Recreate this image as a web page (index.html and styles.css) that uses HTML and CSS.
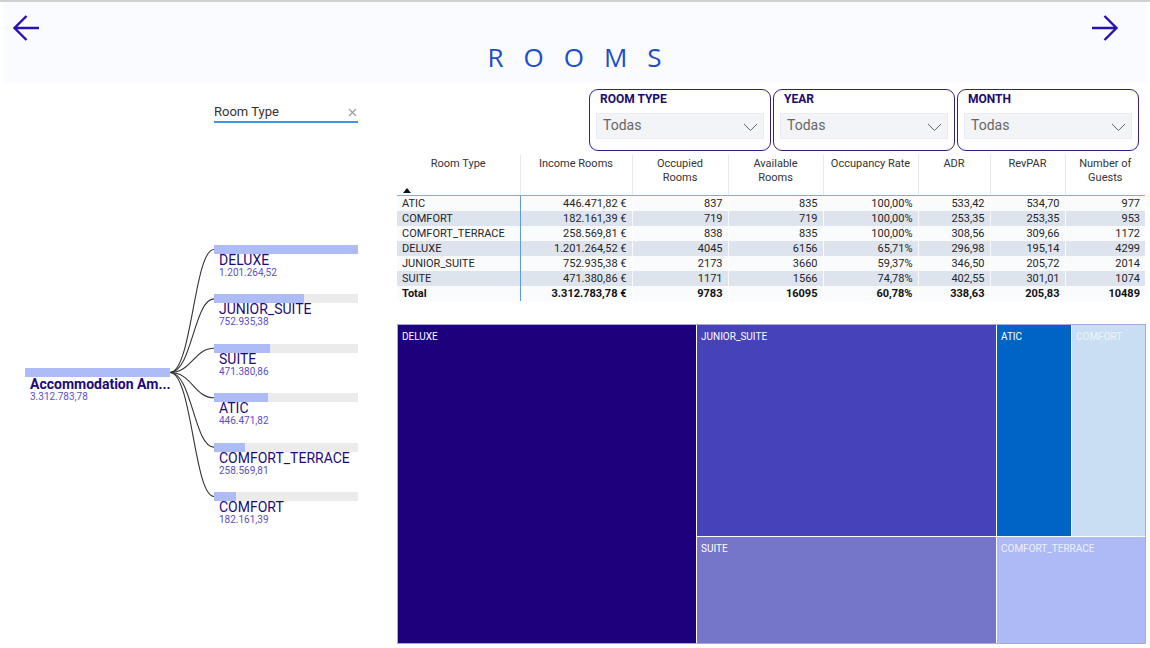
FILE: index.html
```html
<!DOCTYPE html>
<html lang="en">
<head>
<meta charset="utf-8">
<title>Rooms</title>
<link rel="stylesheet" href="styles.css">
</head>
<body>
<header class="band">
  <div class="nav">
    <svg class="arrow" width="28" height="28" viewBox="0 0 28 28"><path d="M27 14 H2.5 M14.5 2 L2.5 14 L14.5 26" fill="none" stroke="#2a10b0" stroke-width="2.4"/></svg>
    <svg class="arrow" width="28" height="28" viewBox="0 0 28 28"><path d="M1 14 H25.5 M13.5 2 L25.5 14 L13.5 26" fill="none" stroke="#2a10b0" stroke-width="2.4"/></svg>
  </div>
  <h1 class="title">ROOMS</h1>
</header>
<main class="main">
  <section class="left">
    <div class="search">
      <span class="search-text">Room Type</span>
      <svg class="search-x" width="9" height="9" viewBox="0 0 9 9"><path d="M1 1 L8 8 M8 1 L1 8" stroke="#9a9a9a" stroke-width="1.1"/></svg>
    </div>
    <div class="tree">
      <svg class="links" width="397" height="280" viewBox="0 0 397 280">
        <g fill="none" stroke="#333" stroke-width="1.1">
          <path d="M170 127.5 C 192 127.5, 194 4.5, 214 4.5"/>
          <path d="M170 127.5 C 192 127.5, 194 53.9, 214 53.9"/>
          <path d="M170 127.5 C 192 127.5, 194 103.3, 214 103.3"/>
          <path d="M170 127.5 C 192 127.5, 194 152.7, 214 152.7"/>
          <path d="M170 127.5 C 192 127.5, 194 202.1, 214 202.1"/>
          <path d="M170 127.5 C 192 127.5, 194 251.5, 214 251.5"/>
        </g>
      </svg>
      <div class="root">
        <div class="bar full"></div>
        <div class="root-label">Accommodation Am...</div>
        <div class="val">3.312.783,78</div>
      </div>
      <div class="children">
        <div class="node"><div class="bar"><div class="fill" style="width:100%"></div></div><div class="lbl">DELUXE</div><div class="val">1.201.264,52</div></div>
        <div class="node"><div class="bar"><div class="fill" style="width:62.7%"></div></div><div class="lbl">JUNIOR_SUITE</div><div class="val">752.935,38</div></div>
        <div class="node"><div class="bar"><div class="fill" style="width:39.2%"></div></div><div class="lbl">SUITE</div><div class="val">471.380,86</div></div>
        <div class="node"><div class="bar"><div class="fill" style="width:37.2%"></div></div><div class="lbl">ATIC</div><div class="val">446.471,82</div></div>
        <div class="node"><div class="bar"><div class="fill" style="width:21.5%"></div></div><div class="lbl">COMFORT_TERRACE</div><div class="val">258.569,81</div></div>
        <div class="node"><div class="bar"><div class="fill" style="width:15.2%"></div></div><div class="lbl">COMFORT</div><div class="val">182.161,39</div></div>
      </div>
    </div>
  </section>
  <section class="right">
    <div class="slicers">
      <div class="slicer">
        <div class="slicer-title">ROOM TYPE</div>
        <div class="dropdown"><span>Todas</span><svg width="15" height="9" viewBox="0 0 15 9"><path d="M1 1 L7.5 7.5 L14 1" fill="none" stroke="#666" stroke-width="1"/></svg></div>
      </div>
      <div class="slicer">
        <div class="slicer-title">YEAR</div>
        <div class="dropdown"><span>Todas</span><svg width="15" height="9" viewBox="0 0 15 9"><path d="M1 1 L7.5 7.5 L14 1" fill="none" stroke="#666" stroke-width="1"/></svg></div>
      </div>
      <div class="slicer">
        <div class="slicer-title">MONTH</div>
        <div class="dropdown"><span>Todas</span><svg width="15" height="9" viewBox="0 0 15 9"><path d="M1 1 L7.5 7.5 L14 1" fill="none" stroke="#666" stroke-width="1"/></svg></div>
      </div>
    </div>
    <table class="grid">
      <colgroup>
        <col style="width:123px"><col style="width:112px"><col style="width:96px"><col style="width:95px"><col style="width:95px"><col style="width:72px"><col style="width:75px"><col style="width:80px">
      </colgroup>
      <thead>
        <tr>
          <th class="first"><div class="th-sort"><span>Room Type</span><span class="tri"></span></div></th>
          <th>Income Rooms</th>
          <th>Occupied<br>Rooms</th>
          <th>Available<br>Rooms</th>
          <th>Occupancy Rate</th>
          <th>ADR</th>
          <th>RevPAR</th>
          <th>Number of<br>Guests</th>
        </tr>
      </thead>
      <tbody>
        <tr><td>ATIC</td><td>446.471,82 €</td><td>837</td><td>835</td><td>100,00%</td><td>533,42</td><td>534,70</td><td>977</td></tr>
        <tr class="alt"><td>COMFORT</td><td>182.161,39 €</td><td>719</td><td>719</td><td>100,00%</td><td>253,35</td><td>253,35</td><td>953</td></tr>
        <tr><td>COMFORT_TERRACE</td><td>258.569,81 €</td><td>838</td><td>835</td><td>100,00%</td><td>308,56</td><td>309,66</td><td>1172</td></tr>
        <tr class="alt"><td>DELUXE</td><td>1.201.264,52 €</td><td>4045</td><td>6156</td><td>65,71%</td><td>296,98</td><td>195,14</td><td>4299</td></tr>
        <tr><td>JUNIOR_SUITE</td><td>752.935,38 €</td><td>2173</td><td>3660</td><td>59,37%</td><td>346,50</td><td>205,72</td><td>2014</td></tr>
        <tr class="alt"><td>SUITE</td><td>471.380,86 €</td><td>1171</td><td>1566</td><td>74,78%</td><td>402,55</td><td>301,01</td><td>1074</td></tr>
        <tr class="total"><td>Total</td><td>3.312.783,78 €</td><td>9783</td><td>16095</td><td>60,78%</td><td>338,63</td><td>205,83</td><td>10489</td></tr>
      </tbody>
    </table>
    <div class="treemap">
      <div class="tile deluxe">DELUXE</div>
      <div class="tm-right">
        <div class="tm-top">
          <div class="tile junior">JUNIOR_SUITE</div>
          <div class="tile atic">ATIC</div>
          <div class="tile comfort">COMFORT</div>
        </div>
        <div class="tm-bottom">
          <div class="tile suite">SUITE</div>
          <div class="tile terrace">COMFORT_TERRACE</div>
        </div>
      </div>
    </div>
  </section>
</main>
</body>
</html>
```

FILE: styles.css
```css
* { box-sizing: border-box; }
html, body { margin: 0; padding: 0; }
body {
  width: 1150px;
  height: 648px;
  overflow: hidden;
  background: #ffffff;
  font-family: Roboto, "Liberation Sans", sans-serif;
  border-top: 2px solid #d0d0d0;
}

/* header band */
.band {
  margin: 0 3px;
  height: 81px;
  background: #fafbfe;
  padding: 12px 28px 0 9px;
}
.nav {
  display: flex;
  justify-content: space-between;
  height: 28px;
}
.arrow { display: block; }
.title {
  margin: 2px 0 0;
  font-family: "Open Sans", sans-serif;
  font-weight: 400;
  font-size: 26px;
  line-height: 26px;
  letter-spacing: 20px;
  padding-left: 38px;
  text-align: center;
  color: #1c4ec4;
}

/* main */
.main {
  display: flex;
}
.left {
  width: 397px;
  flex: none;
}
.right {
  width: 749px;
  flex: none;
}

/* search */
.search {
  margin: 21px 0 0 214px;
  width: 144px;
  display: flex;
  align-items: center;
  justify-content: space-between;
  border-bottom: 2px solid #3b95ee;
  padding-bottom: 1px;
}
.search-text {
  font-size: 13px;
  line-height: 16px;
  color: #333;
}
.search-x { display: block; margin-right: 1px; }

/* decomposition tree */
.tree {
  position: relative;
  margin-top: 122px;
  display: flex;
  align-items: flex-start;
  height: 280px;
}
.links {
  position: absolute;
  left: 0;
  top: 0;
  pointer-events: none;
}
.root {
  margin: 123px 0 0 25px;
  width: 145px;
}
.bar {
  height: 9px;
  background: #ebebeb;
}
.bar.full, .fill {
  background: #adbcf6;
  height: 9px;
}
.root-label {
  margin: 1px 0 0 5px;
  font-weight: 700;
  font-size: 14px;
  line-height: 13px;
  color: #1c0a78;
  white-space: nowrap;
}
.val {
  margin-left: 5px;
  margin-top: 1px;
  font-size: 10px;
  line-height: 10px;
  color: #5b4ec8;
}
.children {
  margin-left: 44px;
  width: 144px;
  display: flex;
  flex-direction: column;
  gap: 16.4px;
}
.node .lbl {
  margin-left: 5px;
  font-size: 14px;
  line-height: 13px;
  color: #1c0a78;
  white-space: nowrap;
}

/* slicers */
.slicers {
  margin-top: 6px;
  display: flex;
  justify-content: flex-end;
  gap: 2px;
  padding-right: 7px;
}
.slicer {
  width: 182px;
  height: 62px;
  border: 1px solid #30208f;
  border-radius: 9px;
  padding: 2px 6px 0 6px;
}
.slicer-title {
  margin-left: 4px;
  font-size: 12px;
  font-weight: 700;
  line-height: 14px;
  color: #1c0a6e;
}
.dropdown {
  margin-top: 7px;
  height: 26px;
  background: #f3f4f8;
  border: 1px solid #ececf0;
  display: flex;
  align-items: center;
  justify-content: space-between;
  padding: 0 5px 0 6px;
}
.dropdown span {
  font-size: 14px;
  color: #666;
  line-height: 20px;
  margin-top: -2px;
}
.dropdown svg { display: block; margin-top: 2px; }

/* table */
.grid {
  margin-top: 4px;
  width: 748px;
  border-collapse: collapse;
  table-layout: fixed;
  font-size: 11px;
  color: #252525;
}
.grid th {
  font-weight: 400;
  color: #333;
  line-height: 14px;
  height: 40px;
  vertical-align: top;
  padding: 2px 3px 0;
  text-align: center;
  border-left: 1px solid #e9e9ec;
  border-bottom: 1px solid #74aee8;
}
.grid th.first { border-left: none; padding: 2px 0 0 0; }
.th-sort {
  display: flex;
  flex-direction: column;
  align-items: center;
  height: 37px;
  justify-content: space-between;
}
.tri {
  align-self: flex-start;
  margin-left: 6px;
  margin-bottom: 1px;
  width: 0;
  height: 0;
  border-left: 4.5px solid transparent;
  border-right: 4.5px solid transparent;
  border-bottom: 5px solid #111;
}
.grid td {
  height: 15px;
  line-height: 15px;
  padding: 0 5px;
  text-align: right;
  white-space: nowrap;
  border-left: 1px solid rgba(255,255,255,0.8);
}
.grid td:first-child {
  text-align: left;
  border-left: none;
  border-right: 1px solid #5b9be0;
}
.grid tbody tr { background: #fafbfd; }
.grid tbody tr.alt { background: #dee4ee; }
.grid tr.total td { font-weight: 700; color: #111; }

/* treemap */
.treemap {
  margin-top: 23px;
  width: 749px;
  height: 320px;
  border: 1px solid #aca7dd;
  background: #fff;
  display: flex;
  gap: 1px;
}
.tile {
  font-size: 10px;
  line-height: 12px;
  padding: 6px 0 0 4px;
  color: #fff;
}
.deluxe { width: 298px; flex: none; background: #1c007c; }
.tm-right {
  flex: 1;
  display: flex;
  flex-direction: column;
  gap: 1px;
}
.tm-top { height: 211px; display: flex; gap: 1px; }
.tm-bottom { flex: 1; display: flex; gap: 1px; }
.junior { width: 299px; flex: none; background: #4642b8; }
.atic { width: 74px; flex: none; background: #0063c6; }
.comfort { flex: 1; background: #c9def3; color: #eef4fc; }
.suite { width: 299px; flex: none; background: #7575c9; }
.terrace { flex: 1; background: #adbaf6; color: #eef0ff; }
```
